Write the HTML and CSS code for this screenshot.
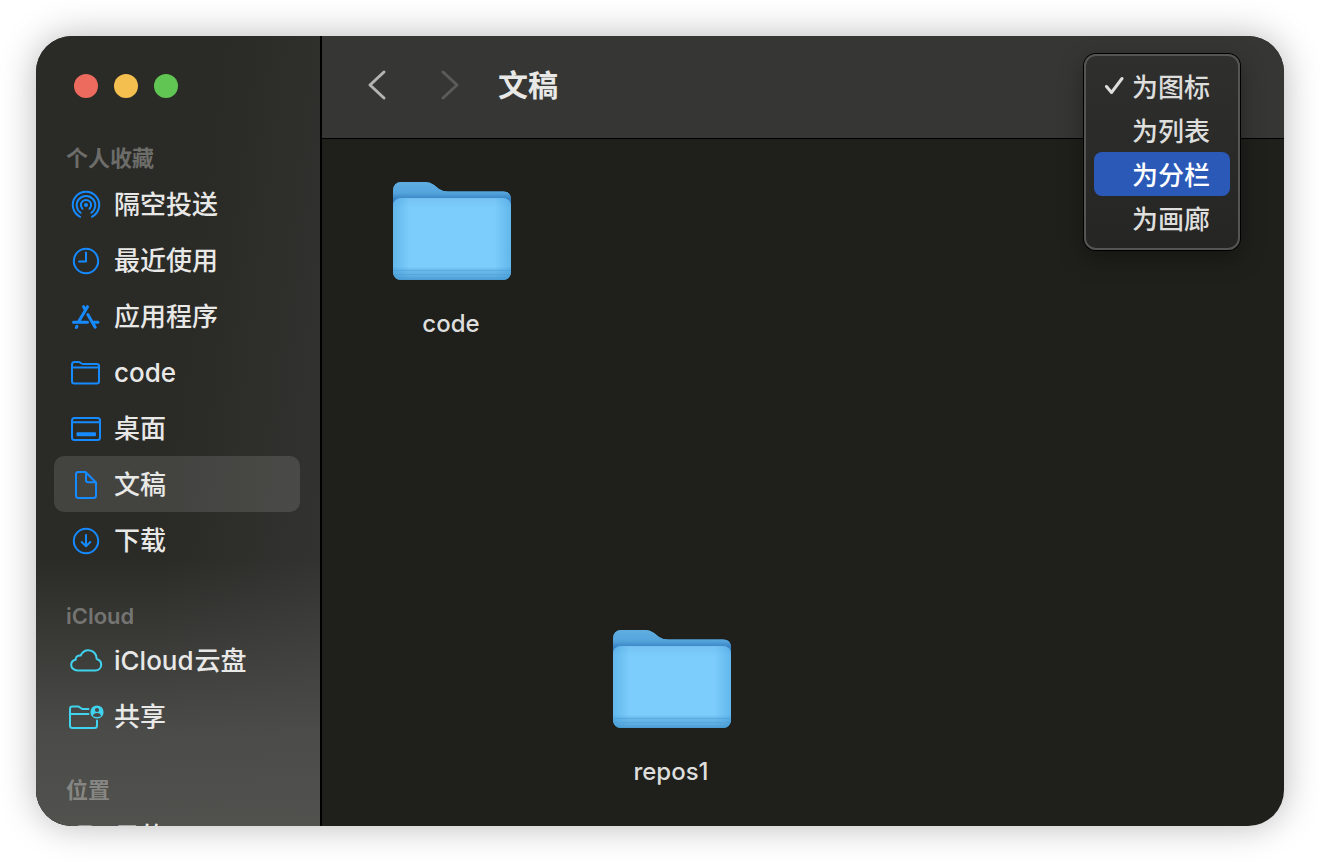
FILE: index.html
```html
<!DOCTYPE html>
<html lang="zh-CN">
<head>
<meta charset="utf-8">
<title>文稿</title>
<link rel="stylesheet" href="styles.css">
</head>
<body>
<div class="window">
  <nav class="sidebar" aria-label="边栏">
    <div class="lights">
      <button class="light close" aria-label="关闭"></button>
      <button class="light minimize" aria-label="最小化"></button>
      <button class="light maximize" aria-label="缩放"></button>
    </div>
    <section class="group">
      <h2 class="group-title">个人收藏</h2>
      <a class="row" href="#airdrop"><svg class="icon" viewBox="0 0 36 36"><circle cx="18" cy="18" r="2" fill="currentColor" stroke="none"/><path d="M14.5 21.700a5.100 5.100 0 1 1 7 0M12.600 25.800a9.300 9.300 0 1 1 10.800 0M12.100 29.800a13.200 13.200 0 1 1 11.800 0"/></svg>隔空投送</a>
      <a class="row" href="#recents"><svg class="icon" viewBox="0 0 36 36"><circle cx="18" cy="18" r="12.200"/><path d="M18 9.500v9h-7"/></svg>最近使用</a>
      <a class="row" href="#apps"><svg class="icon" viewBox="0 0 36 36"><path class="thick" d="M19.500 7.700L11 22M15.500 7.700l1.500 2.400M5.500 23.300h14M25.500 23.300h4.500M19.800 15.500l7.400 12.800M9 27.200l-.7 1.200"/></svg>应用程序</a>
      <a class="row" href="#code"><svg class="icon" viewBox="0 0 36 36"><path d="M4 12.500h27M4 11V9.500Q4 7 6.500 7h4q1 0 2 .8l1 .7q.8.500 2 .500h13.200q2.300 0 2.300 2.300v14.900q0 2.300-2.300 2.300H6.300Q4 28.500 4 26.200z"/></svg>code</a>
      <a class="row" href="#desktop"><svg class="icon" viewBox="0 0 36 36"><rect x="4" y="7" width="28" height="22" rx="2.500"/><path d="M4 11.300h28"/><rect x="8.500" y="21.200" width="19.500" height="4" rx="1" fill="currentColor" stroke="none"/></svg>桌面</a>
      <a class="row selected" href="#documents" aria-current="page"><svg class="icon" viewBox="0 0 36 36"><path d="M10 5h7.500L28 15.500v13q0 2.500-2.500 2.500H10.500Q8 31 8 28.500V7.500Q8 5 10 5zM18 5.500V13q0 2.300 2.300 2.300H28"/></svg>文稿</a>
      <a class="row" href="#downloads"><svg class="icon" viewBox="0 0 36 36"><circle cx="18" cy="18" r="12.200"/><path d="M18 12v11M13.700 19l4.300 4.300 4.300-4.300"/></svg>下载</a>
    </section>
    <section class="group cloud">
      <h2 class="group-title">iCloud</h2>
      <a class="row" href="#icloud"><svg class="icon" viewBox="0 0 36 36"><path d="M9.500 27.500C6 27.500 3.200 25 3.200 21.900c0-2.700 1.800-4.700 4.400-5.200 0-2.900 2.400-4.700 5.100-4.200C14.200 9.300 17 7.300 20.300 7.300c5 0 8.300 3.700 8.400 8.700 2.700.8 4.500 3 4.500 5.700 0 3.300-2.600 5.800-6 5.800z"/></svg><span>iCloud<span class="cjk">云盘</span></span></a>
      <a class="row" href="#shared"><svg class="icon" viewBox="0 0 36 36"><path d="M20.500 10h-6.200L11.700 8.200Q11 7.600 10 7.600H4.500Q2 7.600 2 10v16.500Q2 29 4.500 29h22q2.500 0 2.500-2.500V21.500M2 15h18.500"/><circle cx="29" cy="13" r="6.600" fill="currentColor" stroke="none"/><circle class="cutout" cx="29" cy="11" r="2.100"/><path class="cutout" d="M24.900 17q.7-3 4.100-3t4.100 3q-4.100 2-8.200 0z"/></svg>共享</a>
    </section>
    <section class="group">
      <h2 class="group-title">位置</h2>
      <a class="row device" href="#device"><svg class="icon" viewBox="0 0 36 36"><rect x="10" y="7" width="14" height="22" rx="2"/><path d="M14 10h6"/></svg>云的</a>
    </section>
  </nav>
  <main class="content">
    <header class="toolbar">
      <button class="nav" aria-label="返回"><svg viewBox="0 0 32 32"><path d="M24 3L10 16l14 13"/></svg></button>
      <button class="nav forward" aria-label="前进" disabled><svg viewBox="0 0 32 32"><path d="M9 3l14 13L9 29"/></svg></button>
      <h1 class="title">文稿</h1>
    </header>
    <div class="canvas">
      <a class="folder folder-code" href="#folder-code">
        <svg class="folder-art" viewBox="0 0 120 104">
          <defs>
            <linearGradient id="back" x1="0" y1="0" x2="0" y2="1"><stop offset="0" stop-color="#5aade2"/><stop offset=".16" stop-color="#3d8ccc"/><stop offset="1" stop-color="#4696d4"/></linearGradient>
            <linearGradient id="tab" x1="0" y1="0" x2="0" y2="1"><stop offset="0" stop-color="#60aee1"/><stop offset=".5" stop-color="#54a4dc"/><stop offset=".75" stop-color="#3b86c6"/><stop offset="1" stop-color="#3b86c6"/></linearGradient>
            <linearGradient id="front" x1="0" y1="0" x2="0" y2="1"><stop offset="0" stop-color="#74c2f3"/><stop offset=".12" stop-color="#7ccdfb"/><stop offset=".84" stop-color="#7ccdfb"/><stop offset=".88" stop-color="#6bbaeb"/><stop offset=".94" stop-color="#62b1e3"/><stop offset="1" stop-color="#4b9cd4"/></linearGradient>
            <linearGradient id="edge" x1="0" y1="0" x2="1" y2="0"><stop offset="0" stop-color="#3994d3" stop-opacity=".4"/><stop offset=".14" stop-color="#3994d3" stop-opacity="0"/><stop offset=".86" stop-color="#3994d3" stop-opacity="0"/><stop offset="1" stop-color="#3994d3" stop-opacity=".4"/></linearGradient>
          </defs>
          <path fill="url(#back)" d="M1 11Q1 2 10 2h23q5 0 9 3l5 4q4 2.500 9 2.500h55q8 0 8 8V91q0 9-9 9H10q-9 0-9-9z"/>
          <path fill="url(#tab)" d="M1 22V11Q1 2 10 2h23q5 0 9 3l5 4q4 2.500 9 2.500h55q8 0 8 8V24z"/>
          <rect x="1" y="18" width="118" height="82" rx="8" fill="url(#front)"/>
          <rect x="1" y="18" width="118" height="82" rx="8" fill="url(#edge)"/>
          <path d="M2 90.500h116M2 94.500h116" stroke="#4a9cd5" opacity=".5"/>
        </svg>
        <span>code</span>
      </a>
      <a class="folder folder-repos" href="#folder-repos">
        <svg class="folder-art" viewBox="0 0 120 104">
          <path fill="url(#back)" d="M1 11Q1 2 10 2h23q5 0 9 3l5 4q4 2.500 9 2.500h55q8 0 8 8V91q0 9-9 9H10q-9 0-9-9z"/>
          <path fill="url(#tab)" d="M1 22V11Q1 2 10 2h23q5 0 9 3l5 4q4 2.500 9 2.500h55q8 0 8 8V24z"/>
          <rect x="1" y="18" width="118" height="82" rx="8" fill="url(#front)"/>
          <rect x="1" y="18" width="118" height="82" rx="8" fill="url(#edge)"/>
          <path d="M2 90.500h116M2 94.500h116" stroke="#4a9cd5" opacity=".5"/>
        </svg>
        <span>repos1</span>
      </a>
    </div>
  </main>
  <div class="menu" role="menu" aria-label="显示方式">
    <button class="option" role="menuitemradio" aria-checked="true"><svg class="check" viewBox="0 0 20 20"><path d="M2.500 11.500l5 6L18 3.500"/></svg>为图标</button>
    <button class="option" role="menuitemradio" aria-checked="false">为列表</button>
    <button class="option active" role="menuitemradio" aria-checked="false">为分栏</button>
    <button class="option" role="menuitemradio" aria-checked="false">为画廊</button>
  </div>
</div>
</body>
</html>
```
FILE: styles.css
```css
* { box-sizing: border-box; }

body {
  margin: 0;
  height: 100vh;
  padding: 36px;
  background: #fff;
  color: #e8e8e7;
  font-family: Inter, "Noto Sans CJK SC", sans-serif;
  overflow: hidden;
}

a { color: inherit; text-decoration: none; }

button {
  border: 0;
  padding: 0;
  background: none;
  color: inherit;
  font: inherit;
}

h1, h2 { margin: 0; }

svg { fill: none; stroke-linecap: round; stroke-linejoin: round; }

.window {
  position: relative;
  display: flex;
  height: 100%;
  border-radius: 36px;
  background: #1f201b;
  box-shadow: 0 0 36px rgba(0, 0, 0, .28);
}

.sidebar {
  flex: 0 0 286px;
  padding: 0 20px 0 18px;
  border-right: 2px solid #000;
  border-radius: 36px 0 0 36px;
  background:
    linear-gradient(180deg, rgba(82, 82, 79, 0) 66%, rgba(78, 78, 76, .9) 88%, #51514e 100%),
    linear-gradient(97deg, #2a2a26 50%, #333331 95%);
  overflow: hidden;
}

.lights {
  display: flex;
  gap: 16px;
  height: 104px;
  padding: 38px 20px 0;
}

.light { width: 24px; height: 24px; border-radius: 50%; }
.close { background: #ed6a5e; }
.minimize { background: #f5bf4f; }
.maximize { background: #61c554; }

.group { margin-bottom: 28px; }

.group-title {
  height: 36px;
  padding-left: 12px;
  color: rgba(255, 255, 255, .32);
  font-size: 22px;
  font-weight: 600;
  line-height: 36px;
}

.cloud .group-title { line-height: 40px; }

.row {
  display: flex;
  align-items: center;
  gap: 10px;
  height: 56px;
  padding: 2px 0 0 14px;
  border-radius: 10px;
  color: #e8e8e7;
  font-size: 26px;
  font-weight: 500;
  line-height: 56px;
}

.selected { background: rgba(255, 255, 255, .12); }
.cjk { margin-left: 1px; }

.icon {
  flex: none;
  width: 36px;
  height: 36px;
  color: #168aff;
  stroke: currentColor;
  stroke-width: 2;
}

.cloud .icon { color: #40d3ee; }
.device .icon { color: #9b9b99; }
.icon .thick { stroke-width: 3; }
.icon .cutout { fill: #484846; stroke: none; }

.content {
  flex: 1;
  display: flex;
  flex-direction: column;
  min-width: 0;
}

.toolbar {
  display: flex;
  align-items: center;
  height: 103px;
  padding: 0 38px 4px;
  border-bottom: 1px solid #000;
  border-radius: 0 36px 0 0;
  background: #363634;
}

.nav { width: 32px; height: 32px; margin-right: 42px; }
.nav svg { display: block; stroke: #b4b4b2; stroke-width: 3; }
.forward { margin-right: 32px; }
.forward svg { stroke: #5b5b59; }
.title { font-size: 30px; font-weight: 700; line-height: 40px; }

.canvas { position: relative; flex: 1; }

.folder {
  position: absolute;
  display: flex;
  flex-direction: column;
  align-items: center;
  gap: 24px;
  width: 118px;
  color: #dededd;
  font-size: 24px;
  font-weight: 500;
  line-height: 32px;
}

.folder-code { left: 70px; top: 41px; }
.folder-repos { left: 290px; top: 489px; }
.folder-art { display: block; flex: none; align-self: flex-start; width: 120px; height: 104px; }

.menu {
  position: absolute;
  top: 18px;
  right: 44px;
  width: 156px;
  padding: 8px;
  border: 2px solid #555553;
  border-radius: 12px;
  background: linear-gradient(#2f2f2e, #252524);
  box-shadow: 0 0 0 1px #000, 0 8px 24px rgba(0, 0, 0, .35);
}

.option {
  display: flex;
  align-items: center;
  justify-content: flex-end;
  gap: 8px;
  width: 100%;
  height: 44px;
  padding: 0 20px 2px 0;
  border-radius: 8px;
  color: #dededd;
  font-size: 26px;
  font-weight: 500;
}

.active { background: #2b59b8; color: #fff; }
.check { width: 20px; height: 20px; stroke: currentColor; stroke-width: 3; }
```
